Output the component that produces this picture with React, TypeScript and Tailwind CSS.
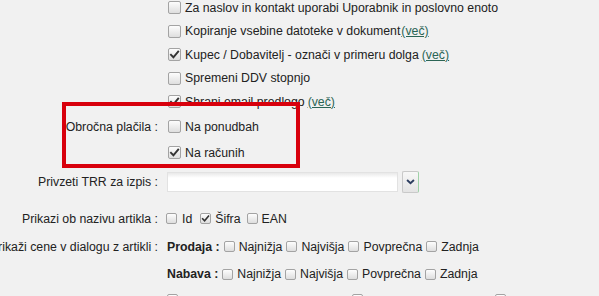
import React from "react";

function Cb({ checked = false, small = false, className = "" }: { checked?: boolean; small?: boolean; className?: string }) {
  const size = small ? "w-[11px] h-[11px]" : "w-[13px] h-[13px]";
  return (
    <span
      className={`inline-flex items-center justify-center shrink-0 rounded-[2px] border border-[#a3a3a3] bg-[linear-gradient(#fdfdfd,#dedede)] ${size} ${className}`}
    >
      {checked && (
        <svg viewBox="0 0 12 12" className={small ? "w-[9px] h-[9px]" : "w-[11px] h-[11px]"}>
          <path d="M2.2 6.4 L4.8 9 L10 2.8" fill="none" stroke="#333" strokeWidth="2.1" strokeLinecap="square" />
        </svg>
      )}
    </span>
  );
}

function Vec({ space = true }: { space?: boolean }) {
  return (
    <span className={`underline text-[#2b6555] ${space ? "ml-[3px]" : "ml-[1px]"}`}>(več)</span>
  );
}

function Row({ label, h, children }: { label?: string; h: string; children?: React.ReactNode }) {
  return (
    <div className={`flex items-center ${h}`}>
      <div className="w-[158px] shrink-0 flex justify-end whitespace-nowrap">
        <span>{label}</span>
      </div>
      <div className="ml-[8px] flex items-center whitespace-nowrap">{children}</div>
    </div>
  );
}

export default function App() {
  const top: { text: string; checked: boolean; link?: "tight" | "space" }[] = [
    { text: "Za naslov in kontakt uporabi Uporabnik in poslovno enoto", checked: false },
    { text: "Kopiranje vsebine datoteke v dokument", checked: false, link: "tight" },
    { text: "Kupec / Dobavitelj - označi v primeru dolga", checked: true, link: "space" },
    { text: "Spremeni DDV stopnjo", checked: false },
    { text: "Shrani email predlogo", checked: true, link: "space" },
  ];
  const priceOpts = ["Najnižja", "Najvišja", "Povprečna", "Zadnja"];
  return (
    <div
      className="relative w-[599px] h-[296px] overflow-hidden bg-[#f1f1f1] text-[12.3px] leading-[14px] text-[#222]"
      style={{ fontFamily: '"Liberation Sans", Arial, sans-serif' }}
    >
      <div className="-mt-[4px]">
        {top.map((r) => (
          <div key={r.text} className="h-[23.5px] flex items-center pl-[168px] whitespace-nowrap">
            <Cb checked={r.checked} />
            <span className="ml-[4px]">{r.text}</span>
            {r.link && <Vec space={r.link === "space"} />}
          </div>
        ))}
      </div>

      <Row label="Obročna plačila :" h="h-[26px]">
        <Cb className="ml-[2px]" />
        <span className="ml-[4px]">Na ponudbah</span>
      </Row>
      <Row h="h-[26px]">
        <Cb checked className="ml-[2px]" />
        <span className="ml-[4px]">Na računih</span>
      </Row>

      <Row label="Privzeti TRR za izpis :" h="h-[32px]">
        <div className="ml-[1px] w-[231px] h-[20px] border border-[#e2e2e2] bg-[linear-gradient(#e9e9e9,#ffffff_5px)]" />
        <div className="ml-[4px] w-[17px] h-[22px] flex items-center justify-center rounded-[2px] border border-[#c9c9c9] border-r-[#9fd1a8] bg-[linear-gradient(#f7f7f7,#e4e4e4)]">
          <svg viewBox="0 0 10 7" className="w-[9px] h-[6px]">
            <path d="M1 1.2 L5 5 L9 1.2" fill="none" stroke="#2c3d5f" strokeWidth="2.2" />
          </svg>
        </div>
      </Row>

      <div className="h-[7px]" />

      <Row label="Prikazi ob nazivu artikla :" h="h-[28px]">
        <Cb small />
        <span className="ml-[5px]">Id</span>
        <Cb small checked className="ml-[8px]" />
        <span className="ml-[4px]">Šifra</span>
        <Cb small className="ml-[6px]" />
        <span className="ml-[4px]">EAN</span>
      </Row>
      <Row label="Prikaži cene v dialogu z artikli :" h="h-[28px]">
        <span className="ml-[1px] font-bold">Prodaja :</span>
        {priceOpts.map((o) => (
          <React.Fragment key={o}>
            <Cb small className="ml-[4px]" />
            <span className="ml-[4px]">{o}</span>
          </React.Fragment>
        ))}
      </Row>
      <Row h="h-[27px]">
        <span className="ml-[1px] font-bold">Nabava :</span>
        {priceOpts.map((o) => (
          <React.Fragment key={o}>
            <Cb small className="ml-[4px]" />
            <span className="ml-[4px]">{o}</span>
          </React.Fragment>
        ))}
      </Row>
      <Row h="h-[24px]">
        <Cb small checked className="ml-[1px]" />
        <Cb small checked className="ml-[174px]" />
        <Cb small className="ml-[132px]" />
      </Row>

      <div className="absolute left-[62px] top-[102px] w-[238px] h-[66px] border-[4px] border-[#d8000c]" />
    </div>
  );
}
